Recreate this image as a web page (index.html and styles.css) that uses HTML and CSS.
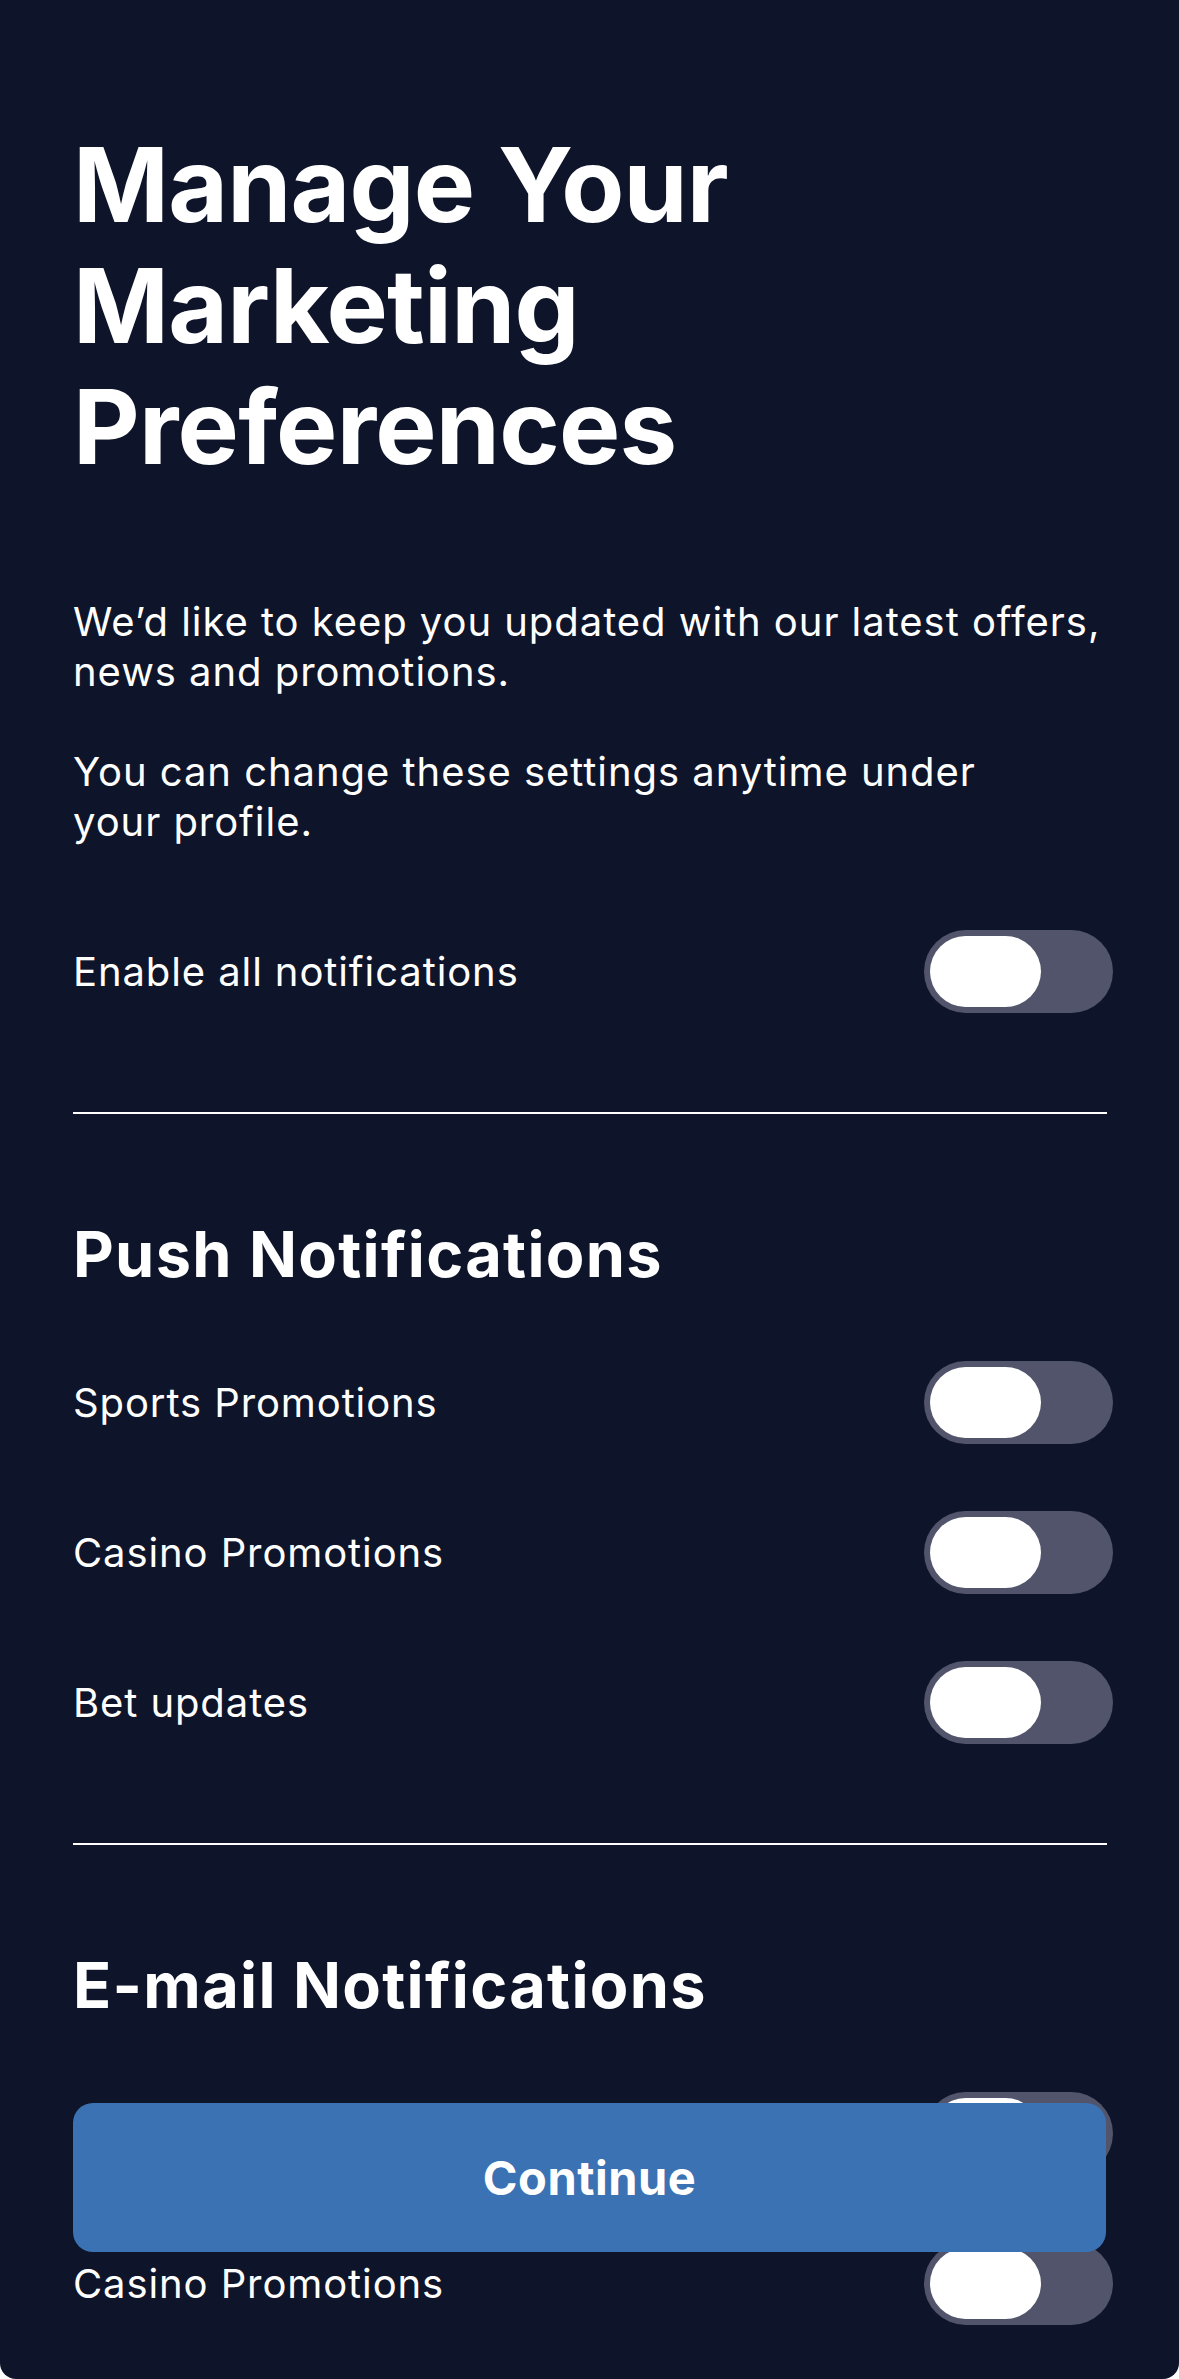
FILE: index.html
```
<!doctype html>
<html>
    <head>
        <title>Marketing Preferences</title>
        <meta charset="utf-8">
        <link rel="stylesheet" href="styles.css">
    </head>

    <body>
        <section class="screen">
            <h1 class="title">Manage Your Marketing Preferences</h1>

            <p class="intro">We’d like to keep you updated with our latest offers, news and promotions.</p>
            <p class="intro">You can change these settings anytime under<br>your profile.</p>

            <div class="row row-all">
                <span class="label">Enable all notifications</span>
                <span class="toggle"><span class="knob"></span></span>
            </div>

            <hr class="divider">

            <h2 class="section-title">Push Notifications</h2>

            <div class="rows">
                <div class="row">
                    <span class="label">Sports Promotions</span>
                    <span class="toggle"><span class="knob"></span></span>
                </div>
                <div class="row">
                    <span class="label">Casino Promotions</span>
                    <span class="toggle"><span class="knob"></span></span>
                </div>
                <div class="row">
                    <span class="label">Bet updates</span>
                    <span class="toggle"><span class="knob"></span></span>
                </div>
            </div>

            <hr class="divider">

            <h2 class="section-title">E-mail Notifications</h2>

            <div class="rows">
                <div class="row">
                    <span class="label">Sports Promotions</span>
                    <span class="toggle"><span class="knob"></span></span>
                </div>
                <div class="row">
                    <span class="label">Casino Promotions</span>
                    <span class="toggle"><span class="knob"></span></span>
                </div>
            </div>

            <button class="continue">Continue</button>
        </section>
    </body>
</html>
```

FILE: styles.css
```
html{
    background: #ffffff;
}

body{
    margin: 0px;
    padding: 0px;
    font-family: Inter, "Noto Sans", sans-serif;
    color: #ffffff;
}

.screen{
    height: 100vh;
    overflow: hidden;
    box-sizing: border-box;
    padding: 124px 72px 0px 73px;
    background: #0e1429;
    border-radius: 0px 0px 16px 16px;
}

.title{
    margin: 0px 0px 110px 0px;
    font-size: 103px;
    line-height: 121px;
    font-weight: 700;
    letter-spacing: -0.8px;
}

.intro{
    margin: 0px 0px 50px 0px;
    font-size: 40px;
    line-height: 50px;
    font-weight: 400;
    letter-spacing: 0.95px;
}

.intro + .intro{
    margin-bottom: 83px;
}

.row{
    display: flex;
    align-items: center;
    justify-content: space-between;
    height: 83px;
}

.rows{
    display: flex;
    flex-direction: column;
    gap: 67px;
}

.label{
    font-size: 40px;
    line-height: 50px;
    letter-spacing: 0.9px;
}

.toggle{
    position: relative;
    display: block;
    width: 189px;
    height: 83px;
    margin-right: -6px;
    border-radius: 42px;
    background: #51546a;
}

.knob{
    display: block;
    margin: 6px;
    width: 111px;
    height: 71px;
    border-radius: 36px;
    background: #ffffff;
}

.divider{
    margin: 99px 0px 0px 0px;
    border: none;
    height: 2px;
    background: #ffffff;
}

.section-title{
    margin: 102px 0px 69px 0px;
    font-size: 63px;
    line-height: 76px;
    font-weight: 700;
    letter-spacing: 1.3px;
}

.continue{
    position: fixed;
    left: 73px;
    right: 73px;
    bottom: 127px;
    height: 149px;
    border: none;
    border-radius: 20px;
    background: #3b72b3;
    color: #ffffff;
    font-family: Inter, "Noto Sans", sans-serif;
    font-size: 47px;
    font-weight: 700;
    letter-spacing: 0.5px;
}
```
